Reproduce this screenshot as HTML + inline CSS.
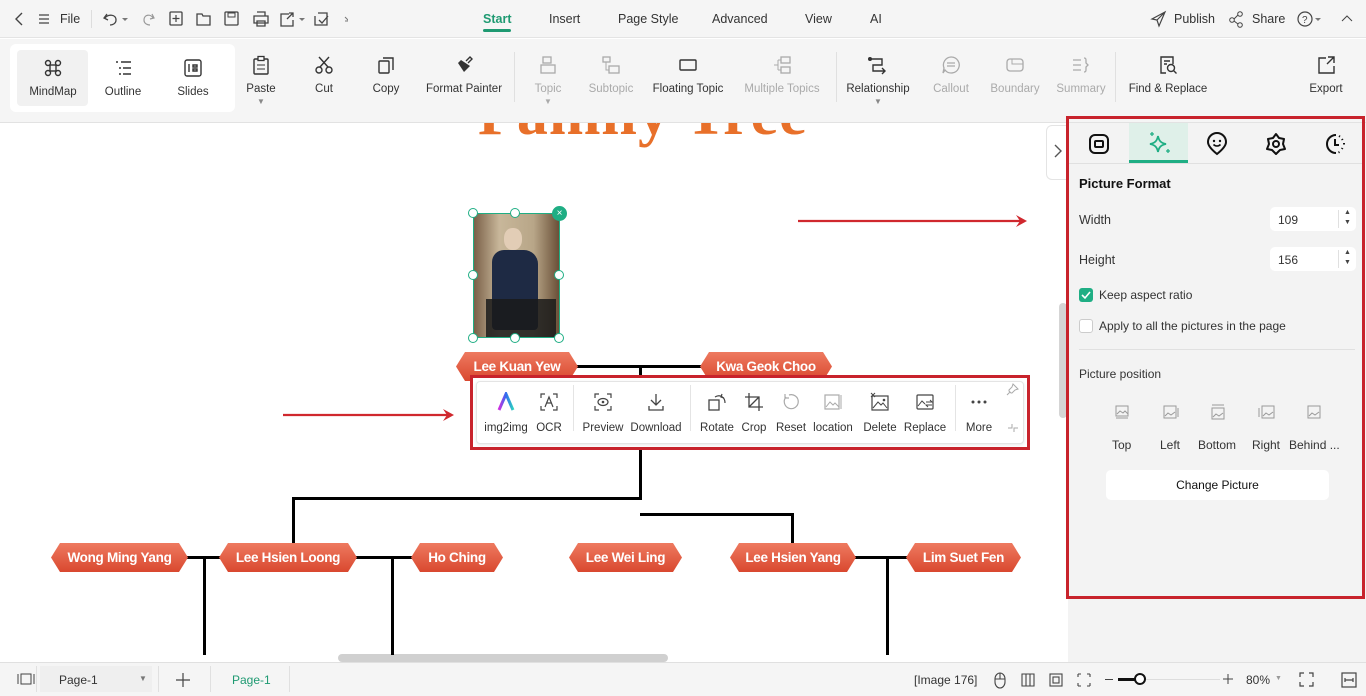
<!DOCTYPE html>
<html><head><meta charset="utf-8"><style>
*{box-sizing:border-box;margin:0;padding:0}
body{width:1366px;height:696px;overflow:hidden;font-family:"Liberation Sans",sans-serif;background:#fff;position:relative;color:#333}
.a{position:absolute}
.t{font-size:12px;color:#333;white-space:nowrap}
.g{color:#aaa}
svg{display:block}
.tb{position:absolute;top:52px;width:70px;text-align:center;font-size:11.5px}
.tb svg{margin:0 auto 8px}
.node{position:absolute;height:29px;background:linear-gradient(#ee7a60,#d9482f);color:#fff;font-weight:bold;font-size:13.5px;text-align:center;line-height:29px;clip-path:polygon(9px 0,calc(100% - 9px) 0,100% 50%,calc(100% - 9px) 100%,9px 100%,0 50%);letter-spacing:-0.3px}
.ln{position:absolute;background:#000}
.fi{position:absolute;top:14px;text-align:center;font-size:11.5px;color:#333}
.fi svg{margin:0 auto 10px}
</style></head><body>
<!-- top bar -->
<div class="a" style="left:0;top:0;width:1366px;height:38px;background:#f5f5f5;border-bottom:1px solid #e4e4e4"></div>
<svg class="a" style="left:12px;top:11px" width="14" height="16"><path d="M10 2 L4 8 L10 14" stroke="#444" fill="none" stroke-width="1.4"/></svg>
<svg class="a" style="left:37px;top:12px" width="14" height="14"><path d="M2 3h10M2 7h10M2 11h10" stroke="#444" stroke-width="1.3"/></svg>
<div class="a t" style="left:60px;top:12px;font-size:12.5px">File</div>
<div class="a" style="left:91px;top:10px;width:1px;height:18px;background:#ddd"></div>
<svg class="a" style="left:102px;top:10px" width="30" height="18"><path d="M5 4 L2 8 L6 10 M3 8 C6 4 14 4 14 10 C14 14 10 15 8 15" stroke="#444" fill="none" stroke-width="1.3"/><path d="M20 8l3 3 3-3z" fill="#777"/></svg>
<svg class="a" style="left:140px;top:10px" width="16" height="18"><path d="M12 4 L14 8 L10 9 M13 8 C11 4 4 4 4 10 C4 14 8 15 10 15" stroke="#999" fill="none" stroke-width="1.2"/></svg>
<svg class="a" style="left:168px;top:10px" width="180" height="18"><rect x="2" y="2" width="12" height="13" rx="1" fill="none" stroke="#444" stroke-width="1.3"/><path d="M8 5v7M4.5 8.5h7" stroke="#444" stroke-width="1.2"/><path d="M29 4h5l1 2h7v9H29z" fill="none" stroke="#444" stroke-width="1.3"/><rect x="57" y="2" width="13" height="13" rx="1" fill="none" stroke="#444" stroke-width="1.3"/><rect x="60" y="3" width="7" height="4" fill="none" stroke="#444"/><path d="M86 6h14v7H86zM89 2h8v4M89 11h8v5h-8z" fill="none" stroke="#444" stroke-width="1.3"/><path d="M121 4h-8v12h12v-6M119 9l6-6M121 3h4v4" fill="none" stroke="#444" stroke-width="1.3"/><path d="M131 8l3 3 3-3z" fill="#777"/><path d="M150 3h9v12h-12V6M151 10l3 3 6-7" fill="none" stroke="#444" stroke-width="1.3"/><path d="M177 7l3 3 3-3M177 11h6" stroke="#777" fill="none"/></svg>
<div class="a t" style="left:483px;top:12px;font-size:12.5px;color:#1f9a72;font-weight:bold">Start</div>
<div class="a" style="left:483px;top:29px;width:28px;height:3px;background:#1f9a72;border-radius:2px"></div>
<div class="a t" style="left:549px;top:12px;font-size:12.5px">Insert</div>
<div class="a t" style="left:618px;top:12px;font-size:12.5px">Page Style</div>
<div class="a t" style="left:712px;top:12px;font-size:12.5px">Advanced</div>
<div class="a t" style="left:805px;top:12px;font-size:12.5px">View</div>
<div class="a t" style="left:870px;top:12px;font-size:12.5px">AI</div>
<svg class="a" style="left:1150px;top:10px" width="18" height="18"><path d="M15 2 L2 9 L7 10 L9 16z M7 10 L15 2" fill="none" stroke="#444" stroke-width="1.2"/></svg>
<div class="a t" style="left:1174px;top:12px;font-size:12.5px">Publish</div>
<svg class="a" style="left:1228px;top:10px" width="18" height="18"><circle cx="4" cy="10" r="2.3" fill="none" stroke="#444"/><circle cx="12" cy="4" r="2.3" fill="none" stroke="#444"/><circle cx="12" cy="15" r="2.3" fill="none" stroke="#444"/><path d="M6 9l4-4M6 11l4 3" stroke="#444"/></svg>
<div class="a t" style="left:1252px;top:12px;font-size:12.5px">Share</div>
<svg class="a" style="left:1296px;top:10px" width="30" height="18"><circle cx="9" cy="9" r="7" fill="none" stroke="#444" stroke-width="1.2"/><text x="6" y="13" font-size="10" font-family="Liberation Sans" fill="#444">?</text><path d="M19 8l3 3 3-3z" fill="#777"/></svg>
<svg class="a" style="left:1340px;top:12px" width="14" height="12"><path d="M2 9l5-5 5 5" fill="none" stroke="#444"/></svg>

<!-- ribbon -->
<div class="a" style="left:0;top:39px;width:1366px;height:84px;background:#f5f5f5;border-bottom:1px solid #e2e2e2"></div>
<div class="a" style="left:10px;top:44px;width:225px;height:68px;background:#fff;border-radius:6px"></div>
<div class="a" style="left:17px;top:50px;width:71px;height:56px;background:#f1f1f1;border-radius:4px"></div>
<div class="tb" style="left:18px;top:58px"><svg width="20" height="20"><circle cx="5" cy="5" r="2.5" fill="none" stroke="#333" stroke-width="1.4"/><circle cx="15" cy="5" r="2.5" fill="none" stroke="#333" stroke-width="1.4"/><circle cx="5" cy="15" r="2.5" fill="none" stroke="#333" stroke-width="1.4"/><circle cx="15" cy="15" r="2.5" fill="none" stroke="#333" stroke-width="1.4"/><rect x="7" y="7" width="6" height="6" fill="none" stroke="#333" stroke-width="1.4"/></svg>MindMap</div>
<div class="tb" style="left:88px;top:58px"><svg width="20" height="20"><path d="M3 4h2M8 4h10M6 10h2M10 10h8M6 16h2M10 16h8" stroke="#333" stroke-width="1.4"/></svg>Outline</div>
<div class="tb" style="left:158px;top:58px"><svg width="20" height="20"><rect x="2" y="2" width="16" height="16" rx="2" fill="none" stroke="#333" stroke-width="1.4"/><path d="M6 6v8M10 7h4v2h-4zM10 11h4v2h-4z" stroke="#333" stroke-width="1.4" fill="none"/></svg>Slides</div>
<div class="tb" style="left:226px;top:55px"><svg width="20" height="20"><rect x="3" y="4" width="14" height="15" rx="1" fill="none" stroke="#333" stroke-width="1.4"/><rect x="7" y="1.5" width="6" height="4" fill="#fff" stroke="#333" stroke-width="1.3"/><path d="M6 10h8M6 14h8" stroke="#333"/></svg>Paste<div style="font-size:8px;color:#888;margin-top:2px">▼</div></div>
<div class="tb" style="left:289px;top:55px"><svg width="20" height="20"><circle cx="5" cy="15" r="3" fill="none" stroke="#333" stroke-width="1.4"/><circle cx="15" cy="15" r="3" fill="none" stroke="#333" stroke-width="1.4"/><path d="M6 12L15 2M14 12L5 2" stroke="#333" stroke-width="1.4"/></svg>Cut</div>
<div class="tb" style="left:351px;top:55px"><svg width="20" height="20"><rect x="3" y="6" width="10" height="12" rx="1" fill="none" stroke="#333" stroke-width="1.4"/><path d="M7 3h10v12" fill="none" stroke="#333" stroke-width="1.4"/></svg>Copy</div>
<div class="tb" style="left:424px;top:55px;width:80px"><svg width="20" height="20"><path d="M4 8l6 9 6-6-9-6z" fill="#333"/><path d="M12 6l4-4 2 2-4 4" fill="none" stroke="#333" stroke-width="1.4"/></svg>Format Painter</div>
<div class="a" style="left:514px;top:52px;width:1px;height:50px;background:#e0e0e0"></div>
<div class="tb g" style="left:513px;top:55px"><svg width="20" height="20"><rect x="5" y="2" width="8" height="6" fill="none" stroke="#aaa" stroke-width="1.3"/><rect x="3" y="10" width="14" height="8" fill="none" stroke="#aaa" stroke-width="1.3"/></svg>Topic<div style="font-size:8px;margin-top:2px">▼</div></div>
<div class="tb g" style="left:576px;top:55px"><svg width="20" height="20"><rect x="2" y="2" width="7" height="5" fill="none" stroke="#aaa" stroke-width="1.3"/><rect x="8" y="11" width="10" height="7" fill="none" stroke="#aaa" stroke-width="1.3"/><path d="M5 7v8h3" fill="none" stroke="#aaa"/></svg>Subtopic</div>
<div class="tb" style="left:648px;top:55px;width:80px"><svg width="20" height="20"><rect x="2" y="5" width="16" height="10" rx="1" fill="none" stroke="#333" stroke-width="1.4"/></svg>Floating Topic</div>
<div class="tb g" style="left:738px;top:55px;width:88px"><svg width="20" height="20"><rect x="9" y="2" width="9" height="6" fill="none" stroke="#aaa" stroke-width="1.3"/><rect x="9" y="12" width="9" height="6" fill="none" stroke="#aaa" stroke-width="1.3"/><path d="M2 10h4M6 5h3M6 15h3M6 5v10" fill="none" stroke="#aaa"/></svg>Multiple Topics</div>
<div class="a" style="left:836px;top:52px;width:1px;height:50px;background:#e0e0e0"></div>
<div class="tb" style="left:839px;top:55px;width:78px"><svg width="22" height="20"><circle cx="3" cy="4" r="2" fill="#333"/><path d="M3 4h12v6H6v6h12M15 13l3 3-3 3" fill="none" stroke="#333" stroke-width="1.4"/></svg>Relationship<div style="font-size:8px;color:#888;margin-top:2px">▼</div></div>
<div class="tb g" style="left:916px;top:55px"><svg width="20" height="20"><path d="M10 2a8 8 0 1 1-6 13l-2 3 1-5A8 8 0 0 1 10 2z M6 8h8M6 11h8" fill="none" stroke="#aaa" stroke-width="1.3"/></svg>Callout</div>
<div class="tb g" style="left:980px;top:55px"><svg width="20" height="20"><rect x="2" y="4" width="16" height="12" rx="3" fill="none" stroke="#aaa" stroke-width="1.3"/><path d="M7 4v5h11" fill="none" stroke="#aaa"/></svg>Boundary</div>
<div class="tb g" style="left:1046px;top:55px"><svg width="20" height="20"><path d="M2 5h8M2 10h8M2 15h8M13 3c2 0 2 1 2 3v2l2 2-2 2v2c0 2 0 3-2 3" fill="none" stroke="#aaa" stroke-width="1.3"/></svg>Summary</div>
<div class="a" style="left:1115px;top:52px;width:1px;height:50px;background:#e0e0e0"></div>
<div class="tb" style="left:1128px;top:55px;width:80px"><svg width="20" height="20"><path d="M8 18H3V2h12v7" fill="none" stroke="#333" stroke-width="1.4"/><circle cx="13" cy="13" r="3.5" fill="none" stroke="#333" stroke-width="1.4"/><path d="M15.5 15.5l3 3M6 6h6M6 9h3" stroke="#333" stroke-width="1.4"/></svg>Find &amp; Replace</div>
<div class="tb" style="left:1291px;top:55px"><svg width="20" height="20"><path d="M10 3H3v15h15v-7M12 2h6v6M18 2l-7 7" fill="none" stroke="#333" stroke-width="1.4"/></svg>Export</div>

<!-- canvas -->
<div class="a" style="left:478px;top:123px;width:330px;height:30px;overflow:hidden"><div style="position:absolute;top:-44px;left:0;font-family:'Liberation Serif',serif;font-weight:bold;font-size:62px;color:#e8702a;white-space:nowrap;letter-spacing:1px">Family Tree</div></div>
<div class="a" style="left:1046px;top:125px;width:24px;height:55px;background:#fff;border:1px solid #e4e4e4;border-right:none;border-radius:6px 0 0 6px"></div>
<svg class="a" style="left:1052px;top:143px" width="12" height="16"><path d="M3 2l6 6-6 6" fill="none" stroke="#555" stroke-width="1.4"/></svg>
<div class="a" style="left:1059px;top:303px;width:8px;height:115px;background:#d5d5d5;border-radius:4px"></div>
<div class="a" style="left:338px;top:654px;width:330px;height:8px;background:#d0d0d0;border-radius:4px"></div>

<!-- lines -->
<div class="ln" style="left:577px;top:365px;width:124px;height:3px"></div>
<div class="ln" style="left:639px;top:366px;width:3px;height:133px"></div>
<div class="ln" style="left:292px;top:497px;width:350px;height:3px"></div>
<div class="ln" style="left:292px;top:497px;width:3px;height:46px"></div>
<div class="ln" style="left:640px;top:513px;width:154px;height:3px"></div>
<div class="ln" style="left:791px;top:513px;width:3px;height:30px"></div>
<div class="ln" style="left:186px;top:556px;width:34px;height:3px"></div>
<div class="ln" style="left:355px;top:556px;width:57px;height:3px"></div>
<div class="ln" style="left:854px;top:556px;width:53px;height:3px"></div>
<div class="ln" style="left:203px;top:557px;width:3px;height:98px"></div>
<div class="ln" style="left:391px;top:557px;width:3px;height:98px"></div>
<div class="ln" style="left:886px;top:557px;width:3px;height:98px"></div>

<!-- nodes -->
<div class="node" style="left:456px;top:352px;width:122px">Lee Kuan Yew</div>
<div class="node" style="left:700px;top:352px;width:132px">Kwa Geok Choo</div>
<div class="node" style="left:51px;top:543px;width:137px">Wong Ming Yang</div>
<div class="node" style="left:219px;top:543px;width:138px">Lee Hsien Loong</div>
<div class="node" style="left:411px;top:543px;width:92px">Ho Ching</div>
<div class="node" style="left:569px;top:543px;width:113px">Lee Wei Ling</div>
<div class="node" style="left:730px;top:543px;width:126px">Lee Hsien Yang</div>
<div class="node" style="left:906px;top:543px;width:115px">Lim Suet Fen</div>

<!-- photo -->
<div class="a" style="left:473px;top:213px;width:87px;height:125px;background:linear-gradient(90deg,#7a6048 0%,#c8b79a 30%,#b8a688 70%,#6a5038 100%);border:1px solid #1fae84;overflow:hidden">
<div class="a" style="left:30px;top:14px;width:18px;height:22px;background:#e2cdb6;border-radius:45%"></div>
<div class="a" style="left:18px;top:36px;width:46px;height:80px;background:#1e2a44;border-radius:12px 14px 4px 4px"></div>
<div class="a" style="left:12px;top:85px;width:70px;height:40px;background:#1a1a1a;opacity:.85"></div>
</div>
<div class="a" style="left:468px;top:208px;width:10px;height:10px;border:1px solid #1fae84;border-radius:50%;background:#fff"></div>
<div class="a" style="left:510px;top:208px;width:10px;height:10px;border:1px solid #1fae84;border-radius:50%;background:#fff"></div>
<div class="a" style="left:468px;top:270px;width:10px;height:10px;border:1px solid #1fae84;border-radius:50%;background:#fff"></div>
<div class="a" style="left:554px;top:270px;width:10px;height:10px;border:1px solid #1fae84;border-radius:50%;background:#fff"></div>
<div class="a" style="left:468px;top:333px;width:10px;height:10px;border:1px solid #1fae84;border-radius:50%;background:#fff"></div>
<div class="a" style="left:510px;top:333px;width:10px;height:10px;border:1px solid #1fae84;border-radius:50%;background:#fff"></div>
<div class="a" style="left:554px;top:333px;width:10px;height:10px;border:1px solid #1fae84;border-radius:50%;background:#fff"></div>
<div class="a" style="left:552px;top:206px;width:15px;height:15px;background:#1fae84;border-radius:50%;color:#fff;font-size:10px;text-align:center;line-height:15px">×</div>

<!-- arrows -->
<svg class="a" style="left:280px;top:405px" width="180" height="20"><path d="M3 10H170" stroke="#d0282e" stroke-width="2.2"/><path d="M163 4l11 6-11 6 4-6z" fill="#d0282e"/></svg>
<svg class="a" style="left:795px;top:211px" width="240" height="20"><path d="M3 10H228" stroke="#d0282e" stroke-width="2.2"/><path d="M221 4l11 6-11 6 4-6z" fill="#d0282e"/></svg>

<!-- floating toolbar -->
<div class="a" style="left:470px;top:375px;width:560px;height:75px;border:3px solid #c8232c;background:#fff"></div>
<div class="a" style="left:476px;top:381px;width:548px;height:63px;border:1px solid #e4e4e4;border-radius:4px;background:#fff;box-shadow:0 1px 3px rgba(0,0,0,.1)"></div>
<div class="fi" style="left:481px;top:392px;width:50px"><svg width="20" height="20"><path d="M3 18L10 2l7 16" fill="none" stroke="url(#gg)" stroke-width="3"/><defs><linearGradient id="gg" x1="0" x2="1"><stop offset="0" stop-color="#d02fe0"/><stop offset=".5" stop-color="#2f6bf0"/><stop offset="1" stop-color="#2fd0c0"/></linearGradient></defs></svg>img2img</div>
<div class="fi" style="left:533px;top:392px;width:32px"><svg width="20" height="20"><path d="M2 6V2h4M14 2h4v4M18 14v4h-4M6 18H2v-4M6 15l4-10 4 10M7.5 11h5" fill="none" stroke="#444" stroke-width="1.2"/></svg>OCR</div>
<div class="a" style="left:573px;top:385px;width:1px;height:46px;background:#e4e4e4"></div>
<div class="fi" style="left:580px;top:392px;width:46px"><svg width="20" height="20"><path d="M2 6V2h4M14 2h4v4M18 14v4h-4M6 18H2v-4" fill="none" stroke="#444" stroke-width="1.2"/><ellipse cx="10" cy="10" rx="5" ry="3.5" fill="none" stroke="#444" stroke-width="1.2"/><circle cx="10" cy="10" r="1.3" fill="#444"/></svg>Preview</div>
<div class="fi" style="left:628px;top:392px;width:56px"><svg width="20" height="20"><path d="M10 2v11M5 8l5 5 5-5M3 14v4h14v-4" fill="none" stroke="#444" stroke-width="1.3"/></svg>Download</div>
<div class="a" style="left:690px;top:385px;width:1px;height:46px;background:#e4e4e4"></div>
<div class="fi" style="left:697px;top:392px;width:40px"><svg width="20" height="20"><rect x="2" y="8" width="10" height="10" fill="none" stroke="#444" stroke-width="1.3"/><path d="M8 5c5-3 10 0 10 6M15 2l-1 3 3 1" fill="none" stroke="#444" stroke-width="1.2"/></svg>Rotate</div>
<div class="fi" style="left:739px;top:392px;width:30px"><svg width="20" height="20"><path d="M5 1v14h14M1 5h14v14M5 15L15 5" fill="none" stroke="#444" stroke-width="1.3"/></svg>Crop</div>
<div class="fi g" style="left:773px;top:392px;width:36px"><svg width="20" height="20"><path d="M5 5a7 7 0 1 0 3-2M4 2v4h4" fill="none" stroke="#aaa" stroke-width="1.2"/></svg>Reset</div>
<div class="fi g" style="left:810px;top:392px;width:46px"><svg width="20" height="20"><rect x="2" y="3" width="14" height="14" fill="none" stroke="#aaa" stroke-width="1.2"/><path d="M3 15l4-5 3 3 2-2 4 4M18 3v14" fill="none" stroke="#aaa"/></svg>location</div>
<div class="fi" style="left:860px;top:392px;width:40px"><svg width="20" height="20"><rect x="2" y="4" width="16" height="14" fill="none" stroke="#444" stroke-width="1.2"/><path d="M3 16l5-6 3 3 2-2 4 5M1 1l4 4M5 1L1 5" fill="none" stroke="#444"/><circle cx="14" cy="8" r="1.3" fill="#444"/></svg>Delete</div>
<div class="fi" style="left:903px;top:392px;width:44px"><svg width="20" height="20"><rect x="2" y="3" width="16" height="14" rx="1" fill="none" stroke="#444" stroke-width="1.2"/><path d="M3 14l4-5 3 3M11 10h6l-2-2M17 13h-6l2 2" fill="none" stroke="#444"/></svg>Replace</div>
<div class="a" style="left:955px;top:385px;width:1px;height:46px;background:#e4e4e4"></div>
<div class="fi" style="left:960px;top:392px;width:38px"><svg width="20" height="20"><circle cx="4" cy="10" r="1.5" fill="#444"/><circle cx="10" cy="10" r="1.5" fill="#444"/><circle cx="16" cy="10" r="1.5" fill="#444"/></svg>More</div>
<svg class="a" style="left:1006px;top:382px" width="14" height="14"><path d="M7 2l5 5-3 1-3 3-1 0-2-2 0-1 3-3zM4 10l-3 3" fill="none" stroke="#aaa"/></svg>
<svg class="a" style="left:1006px;top:421px" width="14" height="14"><path d="M6 3v4H2M8 11V7h4" fill="none" stroke="#aaa"/></svg>

<!-- right panel -->
<div class="a" style="left:1068px;top:123px;width:298px;height:539px;background:#f3f3f3"></div>
<div class="a" style="left:1066px;top:116px;width:299px;height:483px;border:3px solid #c8232c"></div>
<div class="a" style="left:1069px;top:163px;width:293px;height:1px;background:#e0e0e0"></div>
<div class="a" style="left:1129px;top:123px;width:59px;height:40px;background:#dff0e9;border-bottom:3px solid #1fae84"></div>
<svg class="a" style="left:1087px;top:132px" width="24" height="24"><rect x="3" y="3" width="18" height="18" rx="5" fill="none" stroke="#111" stroke-width="2"/><rect x="8" y="9" width="8" height="6" rx="1" fill="none" stroke="#111" stroke-width="2"/></svg>
<svg class="a" style="left:1147px;top:130px" width="26" height="26"><path d="M11 6c1 5 3 7 8 8-5 1-7 3-8 8-1-5-3-7-8-8 5-1 7-3 8-8z" fill="none" stroke="#1fae84" stroke-width="1.8"/><path d="M5 2v4M3 4h4M21 19v4M19 21h4" stroke="#1fae84" stroke-width="1.3"/></svg>
<svg class="a" style="left:1205px;top:132px" width="24" height="24"><path d="M12 22c-5-4-9-8-9-12a9 9 0 0 1 18 0c0 4-4 8-9 12z" fill="none" stroke="#111" stroke-width="2"/><circle cx="9" cy="9" r="1.2" fill="#111"/><circle cx="15" cy="9" r="1.2" fill="#111"/><path d="M8.5 12.5c2 2 5 2 7 0" fill="none" stroke="#111" stroke-width="1.6"/></svg>
<svg class="a" style="left:1264px;top:132px" width="24" height="24"><path d="M12 2l3 4 5 1-1 5 2 5-5 1-4 4-4-4-5-1 2-5-1-5 5-1z" fill="none" stroke="#111" stroke-width="2" stroke-linejoin="round"/><circle cx="12" cy="12" r="3" fill="none" stroke="#111" stroke-width="2"/></svg>
<svg class="a" style="left:1323px;top:132px" width="24" height="24"><path d="M13 3a9 9 0 1 0 0 18" fill="none" stroke="#111" stroke-width="2"/><path d="M16 4l1 .6M19 7l.6 1M21 11v1.5M19.5 16l-.6 1M16.5 20l-1 .5" stroke="#111" stroke-width="2"/><path d="M12 7v6h4" fill="none" stroke="#111" stroke-width="2"/></svg>
<div class="a" style="left:1079px;top:176px;font-size:13px;font-weight:bold;color:#111">Picture Format</div>
<div class="a t" style="left:1079px;top:213px;font-size:12.5px">Width</div>
<div class="a" style="left:1270px;top:207px;width:86px;height:24px;background:#fff;border-radius:5px"></div>
<div class="a t" style="left:1278px;top:213px">109</div>
<div class="a" style="left:1338px;top:210px;width:1px;height:18px;background:#e0e0e0"></div>
<div class="a" style="left:1344px;top:208px;font-size:7px;line-height:10px;color:#444">▲<br>▼</div>
<div class="a t" style="left:1079px;top:253px;font-size:12.5px">Height</div>
<div class="a" style="left:1270px;top:247px;width:86px;height:24px;background:#fff;border-radius:5px"></div>
<div class="a t" style="left:1278px;top:253px">156</div>
<div class="a" style="left:1338px;top:250px;width:1px;height:18px;background:#e0e0e0"></div>
<div class="a" style="left:1344px;top:248px;font-size:7px;line-height:10px;color:#444">▲<br>▼</div>
<div class="a" style="left:1079px;top:288px;width:14px;height:14px;background:#1fae84;border-radius:3px"></div>
<svg class="a" style="left:1079px;top:288px" width="14" height="14"><path d="M3 7l3 3 5-6" fill="none" stroke="#fff" stroke-width="1.6"/></svg>
<div class="a t" style="left:1099px;top:288px">Keep aspect ratio</div>
<div class="a" style="left:1079px;top:319px;width:14px;height:14px;background:#fff;border:1px solid #ccc;border-radius:3px"></div>
<div class="a t" style="left:1099px;top:319px">Apply to all the pictures in the page</div>
<div class="a" style="left:1079px;top:349px;width:276px;height:1px;background:#e0e0e0"></div>
<div class="a t" style="left:1079px;top:367px">Picture position</div>
<svg class="a" style="left:1114px;top:404px" width="210" height="16"><g fill="none" stroke="#999"><rect x="2" y="2" width="12" height="10"/><path d="M2 14h12M3 10l3-3 3 2 2-2 3 3"/><rect x="50" y="2" width="12" height="12"/><path d="M64 4v9M51 12l3-3 3 2 4-3"/><rect x="98" y="4" width="12" height="11"/><path d="M98 1h12M99 13l3-3 3 2 4-3"/><rect x="148" y="2" width="12" height="12"/><path d="M145 4v9M149 12l3-3 3 2 4-3"/><rect x="194" y="2" width="12" height="12"/><path d="M195 12l3-3 3 2 4-3"/></g></svg>
<div class="a t" style="left:1112px;top:438px">Top</div>
<div class="a t" style="left:1160px;top:438px">Left</div>
<div class="a t" style="left:1198px;top:438px">Bottom</div>
<div class="a t" style="left:1252px;top:438px">Right</div>
<div class="a t" style="left:1289px;top:438px">Behind ...</div>
<div class="a" style="left:1106px;top:470px;width:223px;height:30px;background:#fff;border-radius:5px;text-align:center;line-height:30px;font-size:12px;color:#111">Change Picture</div>

<!-- status bar -->
<div class="a" style="left:0;top:662px;width:1366px;height:34px;background:#f5f5f5;border-top:1px solid #e0e0e0"></div>
<svg class="a" style="left:16px;top:672px" width="20" height="14"><path d="M2 2v10M18 2v10" stroke="#444"/><rect x="5" y="2" width="10" height="10" fill="none" stroke="#444"/></svg>
<div class="a" style="left:36px;top:666px;width:1px;height:26px;background:#e0e0e0"></div>
<div class="a" style="left:40px;top:666px;width:112px;height:26px;background:#efefef"></div>
<div class="a t" style="left:59px;top:673px">Page-1</div>
<div class="a" style="left:139px;top:674px;font-size:8px;color:#777">▼</div>
<div class="a" style="left:158px;top:666px;width:1px;height:26px;background:#e0e0e0"></div>
<svg class="a" style="left:175px;top:672px" width="16" height="16"><path d="M8 1v14M1 8h14" stroke="#444" stroke-width="1.2"/></svg>
<div class="a" style="left:210px;top:666px;width:1px;height:26px;background:#e0e0e0"></div>
<div class="a t" style="left:232px;top:673px;color:#1f9a72">Page-1</div>
<div class="a" style="left:289px;top:666px;width:1px;height:26px;background:#e0e0e0"></div>
<div class="a t" style="left:914px;top:673px">[Image 176]</div>
<svg class="a" style="left:992px;top:671px" width="110" height="18"><g fill="none" stroke="#444" stroke-width="1.1"><path d="M3 8a5 6 0 0 1 10 0v3a5 6 0 0 1-10 0zM8 2v6M3 8h10"/><path d="M30 3h12v12H30zM34 3v12M38 3v12"/><rect x="58" y="3" width="12" height="12"/><rect x="61" y="6" width="6" height="6"/><path d="M86 3h3M86 3v3M98 3h-3M98 3v3M86 15h3M86 15v-3M98 15h-3M98 15v-3"/></g></svg>
<div class="a" style="left:1105px;top:679px;width:8px;height:1px;background:#444"></div>
<div class="a" style="left:1118px;top:678px;width:18px;height:3px;background:#111"></div>
<div class="a" style="left:1134px;top:673px;width:12px;height:12px;border:2px solid #111;border-radius:50%;background:#fff"></div>
<div class="a" style="left:1146px;top:679px;width:74px;height:1px;background:#ddd"></div>
<svg class="a" style="left:1222px;top:673px" width="12" height="12"><path d="M6 1v10M1 6h10" stroke="#444"/></svg>
<div class="a t" style="left:1246px;top:673px">80%</div>
<div class="a" style="left:1275px;top:675px;font-size:7px;color:#999">▼</div>
<svg class="a" style="left:1298px;top:671px" width="60" height="18"><g fill="none" stroke="#444" stroke-width="1.2"><path d="M2 6V2h4M11 2h4v4M15 11v4h-4M6 15H2v-4"/><rect x="44" y="2" width="14" height="14"/><path d="M47 9h8M47 7v4M55 7v4"/></g></svg>
</body></html>
